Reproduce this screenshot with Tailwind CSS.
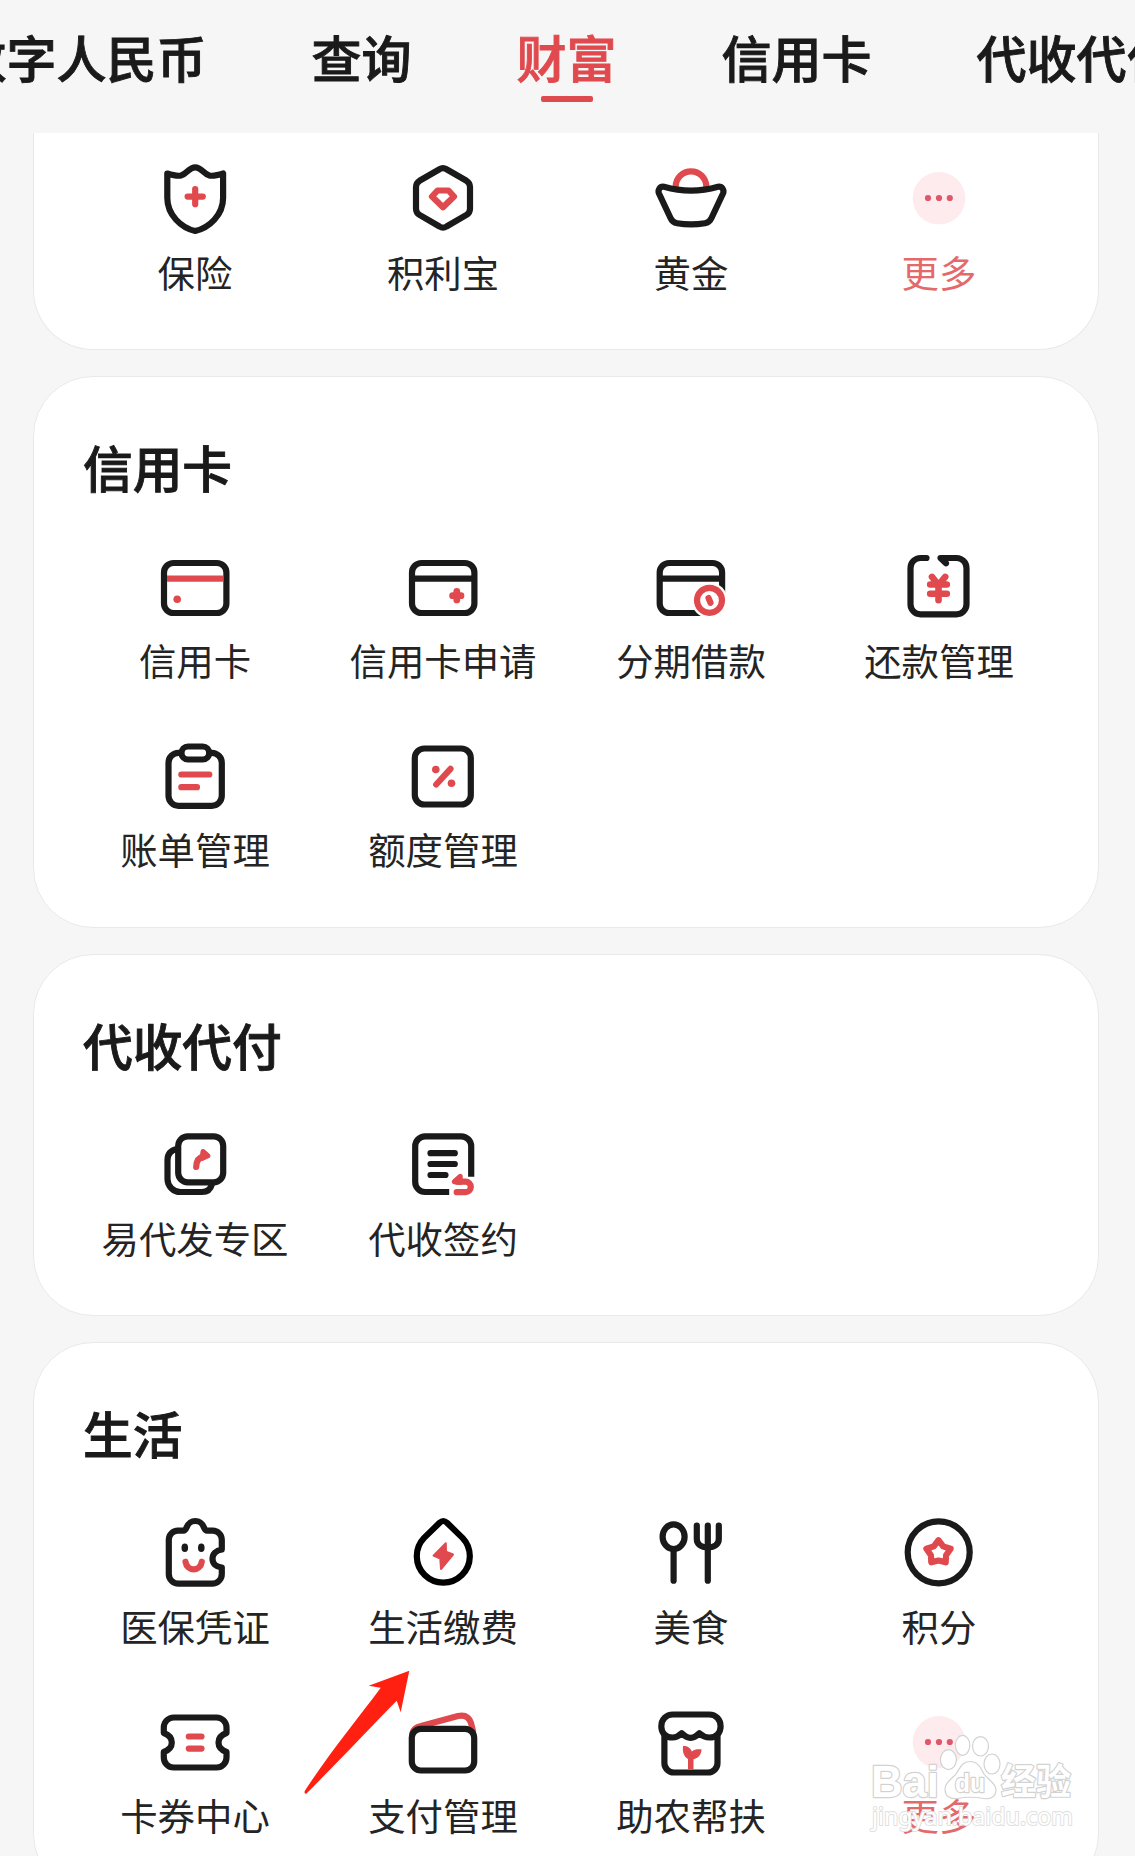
<!DOCTYPE html>
<html lang="zh-CN">
<head>
  <meta charset="UTF-8">
  <meta name="viewport" content="width=device-width, initial-scale=1.0">
  <title>全部服务</title>
  <script src="https://cdn.jsdelivr.net/npm/@tailwindcss/browser@4"></script>
  <style>
    body { font-family: "Noto Sans CJK SC", "Noto Sans", sans-serif; }
    .icon { width: 72px; height: 72px; overflow: visible; fill: none; stroke: #1a1a1a; stroke-width: 6.2; stroke-linecap: round; stroke-linejoin: round; }
    .icon .r { stroke: #e04a4e; }
    .icon .rf { fill: #e04a4e; stroke: none; }
    .bolder { -webkit-text-stroke: 0.9px currentColor; }
  </style>
</head>
<body class="bg-[#f6f6f6] text-[#1a1a1a]">
  <div class="relative w-[1135px] h-[1856px] overflow-hidden">

    <!-- Tabs -->
    <nav class="bolder flex h-[133px] pt-[26px] -ml-[43.5px] gap-[105px] text-[50px] leading-[60px] font-medium whitespace-nowrap">
      <a class="shrink-0">数字人民币</a>
      <a class="shrink-0">查询</a>
      <a class="shrink-0 flex flex-col items-center text-[#e04a4e]">
        财富
        <span class="mt-[10px] w-[52px] h-[6px] rounded-xs bg-[#dd4b4f]"></span>
      </a>
      <a class="shrink-0">信用卡</a>
      <a class="shrink-0">代收代付</a>
    </nav>

    <main class="flex flex-col gap-[26px] pl-[33px] w-[1099px]">

      <!-- Wealth -->
      <section class="h-[217px] bg-white border border-t-0 border-[#e9e9e9] rounded-b-[60px] pl-[37px] pr-[35px] pt-[29px]">
        <div class="grid grid-cols-4 text-[37.4px] leading-[40px] text-[#242424] whitespace-nowrap">
          <div class="flex flex-col items-center gap-[17.5px]">
            <svg class="icon" viewBox="0 0 72 72">
              <path d="M8.3 11.5C13 13 18 14.5 22 13.5C28 12 30 5.3 36.2 5.3C42.4 5.3 44.4 12 50.4 13.5C54.4 14.5 59.4 13 64.1 11.5V36C64.1 53 50 66 36.2 69C22.4 66 8.3 53 8.3 36Z"/>
              <path class="r" d="M36.2 27V42.2M28.6 34.6H43.8"/>
            </svg>
            <span>保险</span>
          </div>
          <div class="flex flex-col items-center gap-[17.5px]">
            <svg class="icon" viewBox="0 0 72 72">
              <path d="M32.5 7.2Q36 5 39.5 7.2L59.5 18.8Q63 21 63 25V46.7Q63 50.7 59.5 52.9L39.5 64.5Q36 66.7 32.5 64.5L12.5 52.9Q9 50.7 9 46.7V25Q9 21 12.5 18.8Z"/>
              <path class="r" d="M30.5 28.5H41.5L47 34.5L36 45.3L25 34.5Z"/>
            </svg>
            <span>积利宝</span>
          </div>
          <div class="flex flex-col items-center gap-[17.5px]">
            <svg class="icon" viewBox="0 0 72 72">
              <path class="r" d="M20.7 26V24.6A15.3 15.3 0 0 1 51.3 24.6V26"/>
              <path fill="#fff" d="M9 24.8Q22.5 28.7 36 28.7Q49.5 28.7 63 24.8C67 24 69.5 28 68 31.5L56.5 56Q54.5 60.5 50 61.2Q36 63.5 22 61.2Q17.5 60.5 15.5 56L4 31.5C2.5 28 5 24 9 24.8Z"/>
            </svg>
            <span>黄金</span>
          </div>
          <div class="flex flex-col items-center gap-[17.5px]">
            <svg class="icon" viewBox="0 0 72 72">
              <circle cx="36" cy="36.3" r="26.3" fill="#fdebed" stroke="none"/>
              <g fill="#e0566a" stroke="none"><circle cx="25" cy="36" r="3.1"/><circle cx="36" cy="36" r="3.1"/><circle cx="46.8" cy="36" r="3.1"/></g>
            </svg>
            <span class="text-[#e4696b]">更多</span>
          </div>
        </div>
      </section>

      <!-- Credit card -->
      <section class="h-[552px] bg-white border border-[#e9e9e9] rounded-[60px] pl-[37px] pr-[35px] pt-[59px]">
        <h2 class="bolder ml-[12px] mb-[54px] text-[49.7px] leading-[60px] font-medium">信用卡</h2>
        <div class="grid grid-cols-4 gap-y-[60px] text-[37.4px] leading-[40px] text-[#242424] whitespace-nowrap">
          <div class="flex flex-col items-center gap-[17.5px]">
            <svg class="icon" viewBox="0 0 72 72">
              <rect x="5" y="13" width="62.4" height="50" rx="9.5"/>
              <path class="r" style="stroke-linecap: butt" d="M8 28.7H64.4"/>
              <circle class="rf" cx="18.2" cy="49.3" r="3.8"/>
            </svg>
            <span>信用卡</span>
          </div>
          <div class="flex flex-col items-center gap-[17.5px]">
            <svg class="icon" viewBox="0 0 72 72">
              <rect x="5" y="13" width="62.4" height="50" rx="9.5"/>
              <path d="M8 28.7H64.4"/>
              <path class="r" style="stroke-width: 6.8" d="M49.8 41.5V49.9M45.6 45.7H54"/>
            </svg>
            <span>信用卡申请</span>
          </div>
          <div class="flex flex-col items-center gap-[17.5px]">
            <svg class="icon" viewBox="0 0 72 72">
              <rect x="4.7" y="13" width="62.4" height="50" rx="9.5"/>
              <path d="M8 28.7H64"/>
              <circle cx="54.5" cy="50.3" r="18" fill="#fff" stroke="none"/>
              <circle class="r" cx="54.5" cy="50.3" r="12.5"/>
              <path class="r" d="M53.5 48L55.5 52.8"/>
            </svg>
            <span>分期借款</span>
          </div>
          <div class="flex flex-col items-center gap-[17.5px]">
            <svg class="icon" viewBox="0 0 72 72">
              <path d="M23.5 8H17.5A10 10 0 0 0 7.5 18V54.3A10 10 0 0 0 17.5 64.3H53.5A10 10 0 0 0 63.5 54.3V18A10 10 0 0 0 53.5 8H37.5L43 13.3"/>
              <path class="r" style="stroke-width: 6.6" d="M29 26.9L35.5 35L42.2 26.9M35.5 35V50.3M27.2 34.5H43.8M27.2 43.7H43.8"/>
            </svg>
            <span>还款管理</span>
          </div>
          <div class="flex flex-col items-center gap-[17.5px]">
            <svg class="icon" viewBox="0 0 72 72">
              <rect x="9.5" y="12.8" width="53.3" height="53" rx="10"/>
              <rect x="22.5" y="6.5" width="27.7" height="13" rx="6.5" fill="#fff"/>
              <path class="r" d="M22.3 34.5H50.3M22.3 47.2H38"/>
            </svg>
            <span>账单管理</span>
          </div>
          <div class="flex flex-col items-center gap-[17.5px]">
            <svg class="icon" viewBox="0 0 72 72">
              <rect x="7.8" y="8.5" width="56" height="56" rx="9.5"/>
              <path class="r" d="M43.5 28.8L29.2 44.5"/>
              <circle class="rf" cx="28.8" cy="29.5" r="3.8"/>
              <circle class="rf" cx="44.5" cy="43.2" r="3.8"/>
            </svg>
            <span>额度管理</span>
          </div>
        </div>
      </section>

      <!-- Collection and payment -->
      <section class="h-[362px] bg-white border border-[#e9e9e9] rounded-[60px] pl-[37px] pr-[35px] pt-[59px]">
        <h2 class="bolder ml-[12px] mb-[54px] text-[49.7px] leading-[60px] font-medium">代收代付</h2>
        <div class="grid grid-cols-4 text-[37.4px] leading-[40px] text-[#242424] whitespace-nowrap">
          <div class="flex flex-col items-center gap-[17.5px]">
            <svg class="icon" viewBox="0 0 72 72">
              <path d="M18 21Q8.5 23 8.5 32V51A13 13 0 0 0 21.5 64H43Q51 64 53 56"/>
              <rect x="19.2" y="8.3" width="45" height="46" rx="9.5"/>
              <path class="r" d="M37.2 39Q37.5 29.5 45 28.5"/>
              <path class="r" fill="#e04a4e" style="stroke-width: 5" d="M44 23.5L49 27.8L43 30.5Z"/>
            </svg>
            <span>易代发专区</span>
          </div>
          <div class="flex flex-col items-center gap-[17.5px]">
            <svg class="icon" viewBox="0 0 72 72">
              <path style="stroke-linecap: butt" d="M42.2 64H18.2A10 10 0 0 1 8.2 54V18.3A10 10 0 0 1 18.2 8.3H54.2A10 10 0 0 1 64.2 18.3V48.7"/>
              <path d="M23.5 25.2H47.8M23.5 36H47.8M23.5 47H38.5"/>
              <path class="r" d="M49.7 64.2H58.5A5.2 5.2 0 0 0 58.5 53.6H50"/>
              <path class="r" fill="#e04a4e" style="stroke-width: 5" d="M47.3 53.7L53.2 48.3L53.2 54.5Z"/>
            </svg>
            <span>代收签约</span>
          </div>
        </div>
      </section>

      <!-- Life -->
      <section class="h-[552px] shrink-0 bg-white border border-[#e9e9e9] rounded-[60px] pl-[37px] pr-[35px] pt-[59px]">
        <h2 class="bolder ml-[12px] mb-[54px] text-[49.7px] leading-[60px] font-medium">生活</h2>
        <div class="grid grid-cols-4 gap-y-[60px] text-[37.4px] leading-[40px] text-[#242424] whitespace-nowrap">
          <div class="flex flex-col items-center gap-[17.5px]">
            <svg class="icon" viewBox="0 0 72 72">
              <path d="M18.8 14.7H24.500C28.500 14.700 26.800 5 36.3 5C45.800 5 44 14.700 48 14.7H53.8A9 9 0 0 1 62.8 23.7V33.5C57 34.5 53.5 38 53.5 42.8S57 51 62.8 51.5V58A9.7 9.7 0 0 1 53.1 67.7H19.5A9.7 9.7 0 0 1 9.8 58V23.7A9 9 0 0 1 18.8 14.7Z"/>
              <g fill="#1a1a1a" stroke="none"><ellipse cx="25.8" cy="31.7" rx="3.3" ry="4.3"/><ellipse cx="42.3" cy="31.7" rx="3.3" ry="4.3"/></g>
              <path class="r" d="M26.5 45.7C28 56 41.3 56 42.8 45.7"/>
            </svg>
            <span>医保凭证</span>
          </div>
          <div class="flex flex-col items-center gap-[17.5px]">
            <svg class="icon" viewBox="0 0 72 72">
              <path style="stroke: #000" d="M36.3 5Q38 5 40 6.8L55.5 21.9A26.5 26.5 0 1 1 17.1 21.9L32.6 6.8Q34.6 5 36.3 5Z"/>
              <path class="r" fill="#e04a4e" style="stroke-width: 2" d="M38.8 27.3L26.5 39.6L33.3 42.5L34 53L46 38.5L39 35.8Z"/>
            </svg>
            <span>生活缴费</span>
          </div>
          <div class="flex flex-col items-center gap-[17.5px]">
            <svg class="icon" viewBox="0 0 72 72">
              <ellipse cx="18.6" cy="20.7" rx="11" ry="12.3"/>
              <path d="M18.6 34V64.7M41.8 9.7V23C41.8 28 46 31.500 52.800 31.500S63.800 28 63.8 23V9.7M52.8 9.7V64.7"/>
            </svg>
            <span>美食</span>
          </div>
          <div class="flex flex-col items-center gap-[17.5px]">
            <svg class="icon" viewBox="0 0 72 72">
              <circle cx="35.7" cy="36.3" r="31"/>
              <path class="r" d="M35.5 24.2L40.2 30.4L47.6 32.8L43.1 39.2L42.7 46.3L35.5 44.5L28.3 46.3L27.9 39.2L23.4 32.8L30.8 30.4Z"/>
            </svg>
            <span>积分</span>
          </div>
          <div class="flex flex-col items-center gap-[17.5px]">
            <svg class="icon" viewBox="0 0 72 72">
              <path d="M14.8 11.5H57.5A10 10 0 0 1 67.5 21.5V27C62 29 59.5 32 59.5 36.5S62 44 67.5 46V51.5A10 10 0 0 1 57.5 61.5H14.8A10 10 0 0 1 4.8 51.5V46C10.3 44 12.8 41 12.8 36.5S10.3 29 4.8 27V21.5A10 10 0 0 1 14.8 11.5Z"/>
              <path class="r" d="M29.8 30.5H42.5M29.8 42.6H42.5"/>
            </svg>
            <span>卡券中心</span>
          </div>
          <div class="flex flex-col items-center gap-[17.5px]">
            <svg class="icon" viewBox="0 0 72 72">
              <path class="r" d="M5.5 27C6.5 23 9.5 21 14 20L51 10C58 8.5 62 11 64 17L66 25"/>
              <rect x="4.8" y="22.8" width="62.4" height="41.7" rx="9" fill="#fff"/>
            </svg>
            <span>支付管理</span>
          </div>
          <div class="flex flex-col items-center gap-[17.5px]">
            <svg class="icon" viewBox="0 0 72 72">
              <path d="M9.4 30V57A9.5 9.5 0 0 0 18.9 66.5H53A9.5 9.5 0 0 0 62.5 57V30"/>
              <path d="M18 8.5H54C61 8.5 65.6 13.5 65.6 20.5C65.6 27 61 31.5 54.5 31.5Q49 31.5 44.4 27.2Q35.6 36.500 26.7 27.2Q22.5 31.5 17.5 31.5C11 31.5 6.3 27 6.3 20.5C6.3 13.5 11 8.5 18 8.5Z"/>
              <path class="rf" d="M28 40C33 40 35.5 42 36.8 45.5C39 43.5 42 43 46.5 43.3C46.5 49 43 52.5 38.5 53.2V63.5H33V53C29 51 27.3 46 28 40Z"/>
            </svg>
            <span>助农帮扶</span>
          </div>
          <div class="flex flex-col items-center gap-[17.5px]">
            <svg class="icon" viewBox="0 0 72 72">
              <circle cx="36" cy="36.3" r="26.3" fill="#fdebed" stroke="none"/>
              <g fill="#e0566a" stroke="none"><circle cx="25" cy="36" r="3.1"/><circle cx="36" cy="36" r="3.1"/><circle cx="46.8" cy="36" r="3.1"/></g>
            </svg>
            <span class="text-[#e4696b]">更多</span>
          </div>
        </div>
      </section>
    </main>

    <!-- Pointer arrow -->
    <svg class="absolute left-[300px] top-[1666px] w-[114px] h-[132px]" viewBox="300 1666 114 132" fill="#ff2012">
      <path d="M409.3 1670.7L368.7 1685.7L380.7 1687.7C360 1716 330 1752 304.7 1791Q304 1794.5 306.5 1793.5C340 1760 368 1730 396.7 1700.7L400.7 1712.3Z"/>
    </svg>

    <!-- Watermark -->
    <svg class="absolute left-[860px] top-[1725px] w-[230px] h-[120px]" viewBox="860 1725 230 120" fill="#fff" stroke="#d2d2d2" stroke-width="1.2" stroke-linejoin="round">
      <ellipse cx="948.4" cy="1759.6" rx="8" ry="10"/>
      <ellipse cx="962.6" cy="1745.3" rx="7.2" ry="10"/>
      <ellipse cx="980.5" cy="1746.3" rx="8" ry="9.700"/>
      <ellipse cx="992" cy="1764" rx="8" ry="10"/>
      <path d="M970 1761.500C978 1761.500 981 1768 984 1774C988 1780 996 1783 996 1790C996 1797 990 1799.500 984 1798.500C976 1797 965 1797 957 1798.500C950 1799.500 945 1796 945 1789C945 1782 952 1779 956 1774C960 1768 962 1761.500 970 1761.500Z"/>
      <g font-family="Liberation Sans, sans-serif" paint-order="stroke" stroke-width="2.4">
        <text x="871" y="1797" font-size="45" font-weight="700" textLength="68" lengthAdjust="spacingAndGlyphs">Bai</text>
        <text x="955" y="1791.500" font-size="25" font-weight="700" textLength="30" lengthAdjust="spacingAndGlyphs">du</text>
      </g>
      <text x="1001" y="1795" font-family="Noto Sans CJK SC, sans-serif" font-size="36" font-weight="700" paint-order="stroke" stroke-width="2.4" textLength="70" lengthAdjust="spacingAndGlyphs">经验</text>
      <text x="872" y="1824.500" font-family="Noto Sans, sans-serif" font-size="24" stroke="#e0e0e0" stroke-width="2" paint-order="stroke" textLength="201" lengthAdjust="spacingAndGlyphs">jingyan.baidu.com</text>
    </svg>
  </div>
</body>
</html>
